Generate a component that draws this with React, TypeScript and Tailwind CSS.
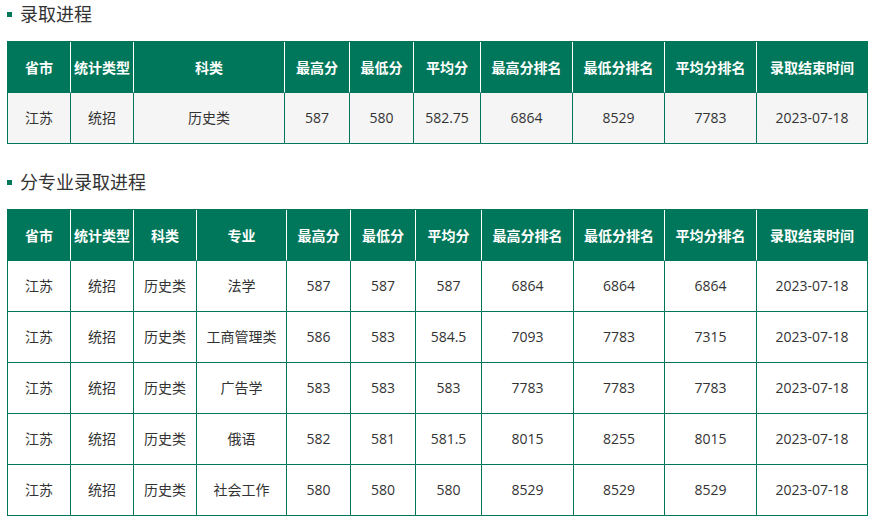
import React from "react";

type Col = { label: string; w: number };

const cols1: Col[] = [
  { label: "省市", w: 63 },
  { label: "统计类型", w: 63 },
  { label: "科类", w: 151 },
  { label: "最高分", w: 65 },
  { label: "最低分", w: 64 },
  { label: "平均分", w: 67 },
  { label: "最高分排名", w: 92 },
  { label: "最低分排名", w: 92 },
  { label: "平均分排名", w: 92 },
  { label: "录取结束时间", w: 111 },
];

const rows1 = [["江苏", "统招", "历史类", "587", "580", "582.75", "6864", "8529", "7783", "2023-07-18"]];

const cols2: Col[] = [
  { label: "省市", w: 63 },
  { label: "统计类型", w: 63 },
  { label: "科类", w: 63 },
  { label: "专业", w: 90 },
  { label: "最高分", w: 64 },
  { label: "最低分", w: 65 },
  { label: "平均分", w: 66 },
  { label: "最高分排名", w: 92 },
  { label: "最低分排名", w: 91 },
  { label: "平均分排名", w: 92 },
  { label: "录取结束时间", w: 111 },
];

const rows2 = [
  ["江苏", "统招", "历史类", "法学", "587", "587", "587", "6864", "6864", "6864", "2023-07-18"],
  ["江苏", "统招", "历史类", "工商管理类", "586", "583", "584.5", "7093", "7783", "7315", "2023-07-18"],
  ["江苏", "统招", "历史类", "广告学", "583", "583", "583", "7783", "7783", "7783", "2023-07-18"],
  ["江苏", "统招", "历史类", "俄语", "582", "581", "581.5", "8015", "8255", "8015", "2023-07-18"],
  ["江苏", "统招", "历史类", "社会工作", "580", "580", "580", "8529", "8529", "8529", "2023-07-18"],
];

function Title({ text }: { text: string }) {
  return (
    <div className="h-[28px] flex items-center">
      <span className="w-[5px] h-[5px] bg-[#00775a] inline-block" />
      <span className="ml-[8px] text-[18px] text-[#333333] leading-[28px]">{text}</span>
    </div>
  );
}

function DataTable({ cols, rows, bodyBg }: { cols: Col[]; rows: string[][]; bodyBg: string }) {
  return (
    <table
      className="table-fixed border-separate border-spacing-0 border-l border-t border-[#00775a]"
      style={{ width: 861 }}
    >
      <colgroup>
        {cols.map((c, i) => (
          <col key={i} style={{ width: c.w }} />
        ))}
      </colgroup>
      <thead>
        <tr>
          {cols.map((c, i) => (
            <th
              key={i}
              className={
                "h-[51px] p-0 bg-[#00775a] text-white font-bold text-[14px] text-center border-b border-r border-b-[#00775a] whitespace-nowrap " +
                (i === cols.length - 1 ? "border-r-[#00775a]" : "border-r-white")
              }
            >
              {c.label}
            </th>
          ))}
        </tr>
      </thead>
      <tbody>
        {rows.map((r, ri) => (
          <tr key={ri}>
            {r.map((v, i) => (
              <td
                key={i}
                className={
                  "h-[51px] p-0 pb-[2px] text-[14px] text-[#333333] text-center border-b border-r border-[#00775a] whitespace-nowrap " +
                  bodyBg
                }
              >
                {v}
              </td>
            ))}
          </tr>
        ))}
      </tbody>
    </table>
  );
}

export default function App() {
  return (
    <div
      className="w-[876px] h-[525px] bg-white px-[7px] overflow-hidden"
      style={{ fontFamily: '"Open Sans", "Noto Sans CJK SC", sans-serif' }}
    >
      <Title text="录取进程" />
      <div className="mt-[13px]">
        <DataTable cols={cols1} rows={rows1} bodyBg="bg-[#f5f5f5]" />
      </div>
      <div className="mt-[24px]">
        <Title text="分专业录取进程" />
      </div>
      <div className="mt-[13px]">
        <DataTable cols={cols2} rows={rows2} bodyBg="bg-white" />
      </div>
    </div>
  );
}
